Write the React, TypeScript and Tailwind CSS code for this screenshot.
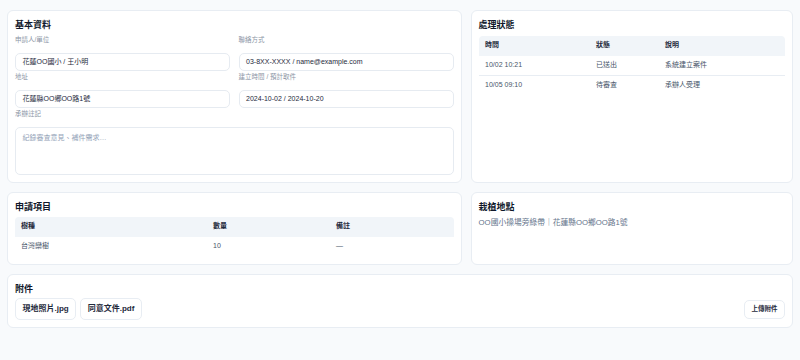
import React from 'react'

const STATUS_ROWS = [
  { time: '10/02 10:21', status: '已送出', note: '系統建立案件' },
  { time: '10/05 09:10', status: '待審查', note: '承辦人受理' },
]

const ITEM_ROWS = [{ species: '台灣欒樹', qty: '10', note: '—' }]

function Card({ title, className = '', children }: { title: string; className?: string; children: React.ReactNode }) {
  return (
    <div className={`rounded-[6px] border border-[#e8edf3] bg-white p-[7px] ${className}`}>
      <h2 className="text-[9px] leading-[14px] font-bold text-[#0f172a]">{title}</h2>
      {children}
    </div>
  )
}

function Field({ label, value }: { label: string; value: string }) {
  return (
    <div>
      <p className="text-[6.5px] leading-[9px] text-[#8b95a5]">{label}</p>
      <div className="mt-[9px] flex h-[18px] items-center rounded-[5px] border border-[#e6ebf1] bg-white px-[6.5px] text-[7px] text-[#1e293b]">
        {value}
      </div>
    </div>
  )
}

export default function App() {
  return (
    <div className="min-h-screen bg-[#f8fafc] px-[7px] pt-[10px] font-['Liberation_Sans','Noto_Sans_CJK_TC',sans-serif]">
      <div className="grid grid-cols-[1.41fr_1fr] gap-[9px]">
        {/* 基本資料 */}
        <Card title="基本資料">
          <div className="mt-[3px] grid grid-cols-2 gap-x-[8.6px] gap-y-[1px]">
            <Field label="申請人/單位" value="花蓮OO國小 / 王小明" />
            <Field label="聯絡方式" value="03-8XX-XXXX / name@example.com" />
            <Field label="地址" value="花蓮縣OO鄉OO路1號" />
            <Field label="建立時間 / 預計取件" value="2024-10-02 / 2024-10-20" />
          </div>
          <p className="mt-[1px] text-[6.5px] leading-[9px] text-[#8b95a5]">承辦註記</p>
          <textarea
            className="mt-[8.7px] block h-[48px] w-full resize-none rounded-[5px] border border-[#e6ebf1] bg-white px-[6.5px] py-[5.5px] text-[7px] leading-[10px] text-[#334155] outline-none placeholder:text-[#94a3b8]"
            placeholder="紀錄審查意見、補件需求…"
          />
        </Card>

        {/* 處理狀態 */}
        <Card title="處理狀態">
          <div className="mt-[3.5px] text-[7px]">
            <div className="grid h-[20px] grid-cols-[111px_69px_1fr] items-center rounded-t-[4px] bg-[#f1f5f9] px-[6.5px] font-bold text-[#1e293b]">
              <span>時間</span>
              <span>狀態</span>
              <span>說明</span>
            </div>
            {STATUS_ROWS.map((r, i) => (
              <div
                key={r.time}
                className={`grid h-[20px] grid-cols-[111px_69px_1fr] items-center px-[6.5px] text-[#475569] ${
                  i < STATUS_ROWS.length - 1 ? 'border-b border-[#e8edf3]' : ''
                }`}
              >
                <span>{r.time}</span>
                <span>{r.status}</span>
                <span>{r.note}</span>
              </div>
            ))}
          </div>
        </Card>

        {/* 申請項目 */}
        <Card title="申請項目">
          <div className="mt-[3px] text-[7px]">
            <div className="grid h-[20px] grid-cols-[192px_123px_1fr] items-center rounded-t-[4px] bg-[#f1f5f9] px-[6px] font-bold text-[#1e293b]">
              <span>樹種</span>
              <span>數量</span>
              <span>備註</span>
            </div>
            {ITEM_ROWS.map((r) => (
              <div key={r.species} className="grid h-[20px] grid-cols-[192px_123px_1fr] items-center px-[6px] text-[#475569]">
                <span>{r.species}</span>
                <span>{r.qty}</span>
                <span>{r.note}</span>
              </div>
            ))}
          </div>
        </Card>

        {/* 栽植地點 */}
        <Card title="栽植地點">
          <p className="mt-[3px] text-[7.75px] leading-[11px] text-[#64748b]">OO國小操場旁綠帶｜花蓮縣OO鄉OO路1號</p>
        </Card>
      </div>

      {/* 附件 */}
      <Card title="附件" className="mt-[9px]">
        <div className="mt-[2.7px] flex items-center justify-between">
          <div className="flex gap-[4px]">
            {['現地照片.jpg', '同意文件.pdf'].map((f) => (
              <span
                key={f}
                className="flex h-[21.5px] items-center rounded-[5px] border border-[#e8edf3] bg-white px-[6.5px] text-[8px] font-bold text-[#1e293b]"
              >
                {f}
              </span>
            ))}
          </div>
          <button className="flex h-[19px] items-center rounded-[5px] border border-[#e8edf3] bg-white px-[6.5px] text-[6.5px] font-bold text-[#1e293b]">
            上傳附件
          </button>
        </div>
      </Card>
    </div>
  )
}
